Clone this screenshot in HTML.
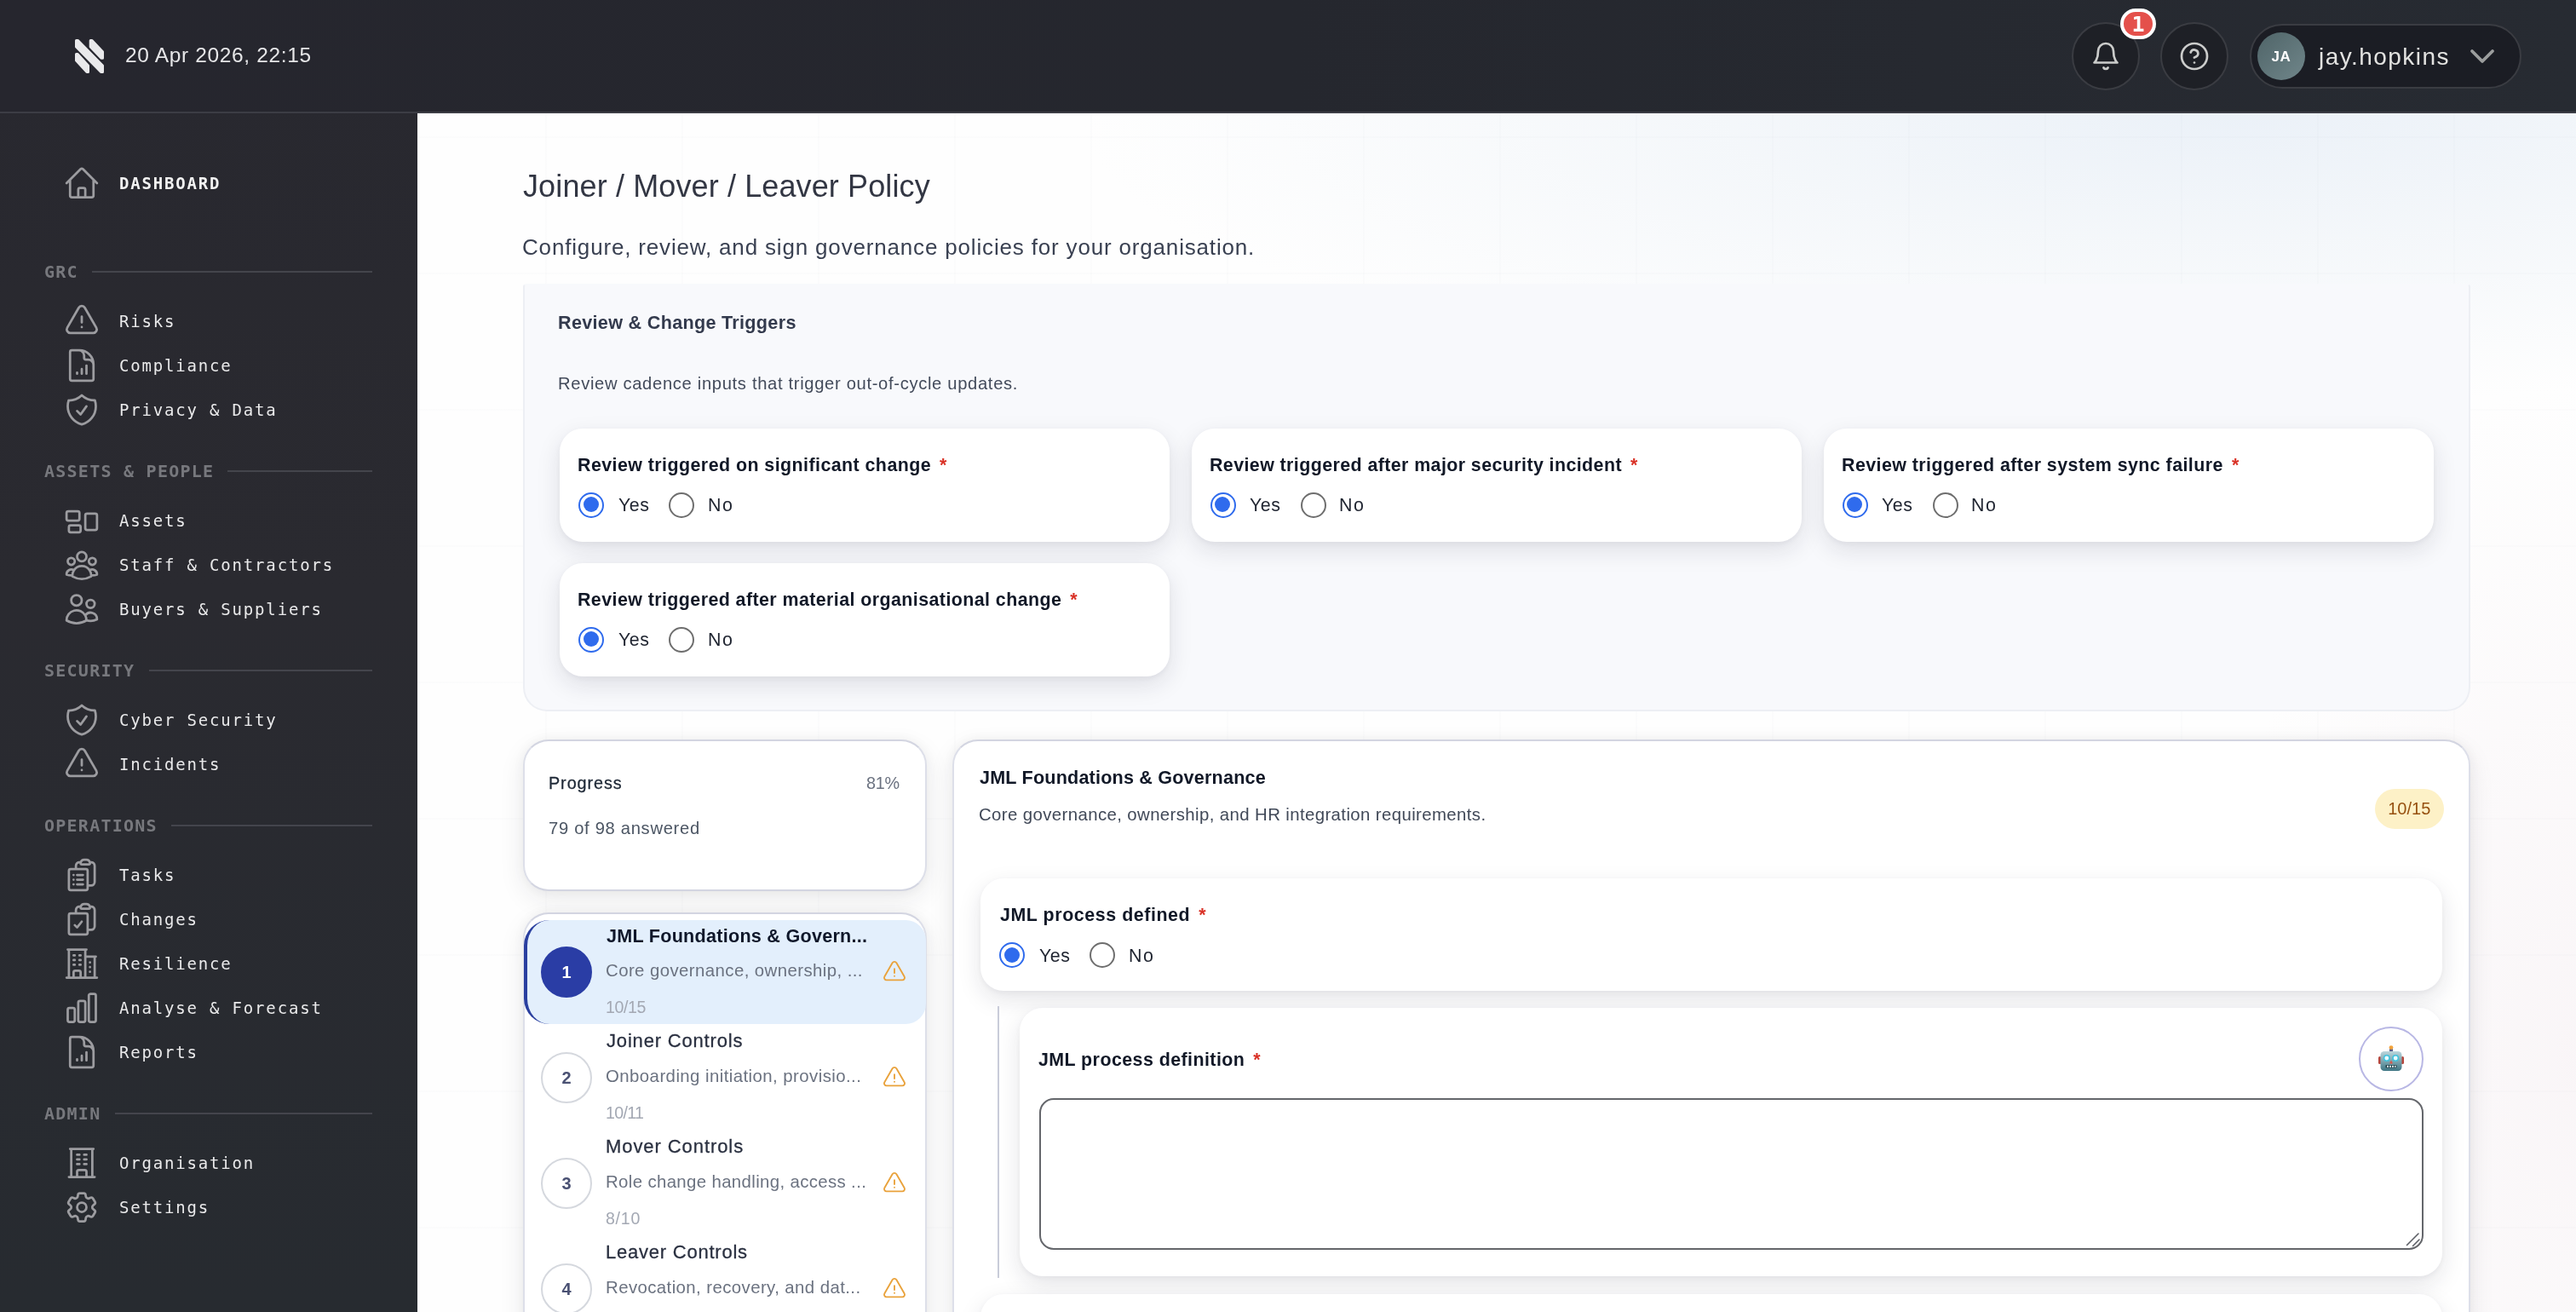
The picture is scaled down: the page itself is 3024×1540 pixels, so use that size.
<!DOCTYPE html>
<html lang="en">
<head>
<meta charset="utf-8">
<title>Joiner / Mover / Leaver Policy</title>
<style>
*{box-sizing:border-box;margin:0;padding:0}
html,body{width:3024px;height:1540px;overflow:hidden;background:#fff}
body{font-family:"Liberation Sans",sans-serif;color:#111827;position:relative}
.abs{position:absolute}
.t{position:absolute;white-space:nowrap;line-height:1}
i{display:block}
/* header */
#hdr{position:absolute;left:0;top:0;width:3024px;height:133px;background:linear-gradient(90deg,#26262e 0%,#25272e 50%,#272b32 100%);border-bottom:2px solid #3c3d45;z-index:5}
.hbtn{position:absolute;top:26px;width:80px;height:80px;border-radius:50%;background:#1e2026;border:2px solid #3a3c42}
.hbtn svg{position:absolute;left:20px;top:20px;width:36px;height:36px;fill:none;stroke:#cbcccb;stroke-width:1.8;stroke-linecap:round;stroke-linejoin:round}
#badge{position:absolute;left:2489px;top:10px;width:42px;height:36px;border-radius:18px;background:#e4504b;border:4px solid #fff;color:#fff;font-family:"DejaVu Sans Mono","Liberation Mono",monospace;font-weight:700;font-size:25px;line-height:29px;text-align:center}
#user{position:absolute;left:2640.5px;top:28px;width:319px;height:75.5px;border-radius:38px;background:#1b1d24;border:2px solid #3a3c42}
#avatar{position:absolute;left:2650px;top:38px;width:56px;height:56px;border-radius:50%;background:linear-gradient(135deg,#4f6468,#70868a);color:#fff;font-weight:700;font-size:17px;line-height:57px;text-align:center;letter-spacing:.6px}
/* sidebar */
#side{position:absolute;left:0;top:0;width:490px;height:1540px;background:linear-gradient(180deg,#28282f 0%,#2a2a30 45%,#272b30 100%);z-index:4}
.nav{position:absolute;left:139.5px;font-family:"DejaVu Sans Mono","Liberation Mono",monospace;font-size:19px;letter-spacing:1.82px;color:#e9e9ea;line-height:1;white-space:nowrap}
.nav.b{font-weight:700;color:#f2f2f2}
.sec{position:absolute;left:52px;font-family:"DejaVu Sans Mono","Liberation Mono",monospace;font-size:20px;font-weight:700;letter-spacing:1.25px;color:#77787d;line-height:1;white-space:nowrap}
.sln{position:absolute;height:2px;background:#44454c}
.ico{position:absolute;left:74px;width:44px;height:44px;fill:none;stroke:#9c9ca0;stroke-width:1.5;stroke-linecap:round;stroke-linejoin:round}
/* main */
#main{position:absolute;left:0;top:0;width:3024px;height:1540px;overflow:hidden;
background:radial-gradient(ellipse 1350px 340px at 2620px 133px,#ebf1f8 0%,rgba(241,245,249,.75) 45%,rgba(255,255,255,0) 100%),
radial-gradient(ellipse 420px 800px at 3024px 1250px,rgba(249,245,247,.95) 0%,rgba(255,255,255,0) 100%),#fefefe}
#grid{position:absolute;left:0;top:0;width:3024px;height:1540px;
background-image:linear-gradient(90deg,rgba(120,130,150,.02) 0,rgba(120,130,150,.02) 2px,transparent 2px),linear-gradient(180deg,rgba(120,130,150,.02) 0,rgba(120,130,150,.02) 2px,transparent 2px);background-size:160px 160px}
#panel{background:#f8f9fc;border:2px solid #edeff4;border-top-color:#f8f9fc;border-radius:4px 4px 28px 28px}
.qc{background:#fff;border-radius:27px;box-shadow:0 10px 28px rgba(28,30,50,.115),0 2px 6px rgba(28,30,50,.045)}
.ql{font-size:21.4px;font-weight:700;color:#111827}
.req{color:#d93025;margin-left:10px;font-weight:700}
.rd{width:30px;height:30px;border-radius:50%;border:2px solid #6e6e6e;background:#fff}
.rd.on{border:2.5px solid #2f6bed}
.rd.on i{position:absolute;left:3.5px;top:3.5px;width:18px;height:18px;border-radius:50%;background:#2f6bed}
.card{background:#fff;border:2px solid #d3d5e1;border-left-color:#dddfe9;border-right-color:#dddfe9;border-radius:30px;box-shadow:0 10px 30px rgba(30,30,50,.085),0 0 14px rgba(30,30,50,.045)}
.lsel{background:#e3effc;border-left:4px solid #2a3f9f;border-radius:30px 24px 24px 30px}
.num{width:60px;height:60px;border-radius:50%;border:2px solid #d5d8de;background:#fff;color:#4a5173;font-weight:700;font-size:20px;line-height:57px;text-align:center}
.num.sel{background:#2a3da5;border-color:#2a3da5;color:#fff}
#cnt{left:2788px;top:925.5px;width:80.5px;height:47px;border-radius:24px;background:#fdf1c7;color:#96500f;font-size:20px;line-height:47px;text-align:center}
#robot{left:2769px;top:1204.5px;width:76px;height:76px;border-radius:50%;border:2px solid #b8b7e4;background:#fff}
#robot svg{position:absolute;left:20px;top:19px}
#ta{left:1219.5px;top:1289px;width:1625.5px;height:178px;border:2px solid #64666b;border-radius:17px;background:#fff}
.t,.nav,.sec,#badge,#avatar,.num,#cnt{will-change:transform}
.lt.m{-webkit-text-stroke:.3px #2a3040}
#prog{-webkit-text-stroke:.3px #1f2937}
</style>
</head>
<body>
<div id="main"><div id="grid"></div>
<div class="t " id="title" style="left:614.25px;top:200.53px;font-size:36px;color:#323643;letter-spacing:0.121px;">Joiner / Mover / Leaver Policy</div>
<div class="t " id="sub" style="left:612.75px;top:276.99px;font-size:26px;color:#3a4152;letter-spacing:0.829px;">Configure, review, and sign governance policies for your organisation.</div>
<div class="abs" id="panel" style="left:613.5px;top:332.5px;width:2286.5px;height:502.5px"></div>
<div class="t " id="ptitle" style="left:654.75px;top:367.72px;font-size:21.6px;color:#333a4d;font-weight:700;letter-spacing:0.304px;">Review &amp; Change Triggers</div>
<div class="t " id="pdesc" style="left:654.75px;top:439.65px;font-size:20.2px;color:#434b5b;letter-spacing:0.667px;">Review cadence inputs that trigger out-of-cycle updates.</div>
<div class="abs qc" style="left:657.00px;top:502.50px;width:716.00px;height:133px"></div>
<div class="t ql" id="q1" style="left:678.00px;top:535.88px;font-size:21.4px;color:#111827;font-weight:700;letter-spacing:0.445px;">Review triggered on significant change<span class="req">*</span></div>
<div class="abs rd on" style="left:679.00px;top:577.75px"><i></i></div>
<div class="t yn" id="yes" style="left:725.75px;top:583.38px;font-size:21.4px;color:#1f2430;letter-spacing:0.5px;">Yes</div>
<div class="abs rd" style="left:785.00px;top:577.75px"></div>
<div class="t yn" id="no" style="left:830.50px;top:583.38px;font-size:21.4px;color:#1f2430;letter-spacing:1.5px;">No</div>
<div class="abs qc" style="left:1398.50px;top:502.50px;width:716.00px;height:133px"></div>
<div class="t ql" id="q2" style="left:1420.25px;top:535.88px;font-size:21.4px;color:#111827;font-weight:700;letter-spacing:0.416px;">Review triggered after major security incident<span class="req">*</span></div>
<div class="abs rd on" style="left:1420.50px;top:577.75px"><i></i></div>
<div class="t yn" style="left:1467.25px;top:583.38px;font-size:21.4px;color:#1f2430;letter-spacing:0.5px;">Yes</div>
<div class="abs rd" style="left:1526.50px;top:577.75px"></div>
<div class="t yn" style="left:1572.00px;top:583.38px;font-size:21.4px;color:#1f2430;letter-spacing:1.5px;">No</div>
<div class="abs qc" style="left:2140.50px;top:502.50px;width:716.50px;height:133px"></div>
<div class="t ql" id="q3" style="left:2162.25px;top:535.88px;font-size:21.4px;color:#111827;font-weight:700;letter-spacing:0.445px;">Review triggered after system sync failure<span class="req">*</span></div>
<div class="abs rd on" style="left:2162.50px;top:577.75px"><i></i></div>
<div class="t yn" style="left:2209.25px;top:583.38px;font-size:21.4px;color:#1f2430;letter-spacing:0.5px;">Yes</div>
<div class="abs rd" style="left:2268.50px;top:577.75px"></div>
<div class="t yn" style="left:2314.00px;top:583.38px;font-size:21.4px;color:#1f2430;letter-spacing:1.5px;">No</div>
<div class="abs qc" style="left:657.00px;top:660.50px;width:716.00px;height:133px"></div>
<div class="t ql" id="q4" style="left:678.00px;top:693.88px;font-size:21.4px;color:#111827;font-weight:700;letter-spacing:0.427px;">Review triggered after material organisational change<span class="req">*</span></div>
<div class="abs rd on" style="left:679.00px;top:735.75px"><i></i></div>
<div class="t yn" style="left:725.75px;top:741.38px;font-size:21.4px;color:#1f2430;letter-spacing:0.5px;">Yes</div>
<div class="abs rd" style="left:785.00px;top:735.75px"></div>
<div class="t yn" style="left:830.50px;top:741.38px;font-size:21.4px;color:#1f2430;letter-spacing:1.5px;">No</div>
<div class="abs card" style="left:614px;top:868px;width:474px;height:178px"></div>
<div class="t " id="prog" style="left:644.00px;top:909.74px;font-size:19.8px;color:#1f2937;letter-spacing:0.922px;">Progress</div>
<div class="t " id="pct" style="left:1016.50px;top:909.74px;font-size:19.8px;color:#6b7280;letter-spacing:-0.25px;">81%</div>
<div class="t " id="ans" style="left:644.00px;top:961.90px;font-size:20.2px;color:#4b5563;letter-spacing:0.69px;">79 of 98 answered</div>
<div class="abs card" style="left:614px;top:1071px;width:474px;height:560px"></div>
<div class="abs lsel" style="left:614.5px;top:1080.00px;width:472.5px;height:121.5px"></div>
<div class="abs num sel" style="left:635px;top:1110.75px">1</div>
<div class="t lt s" id="l1t" style="left:711.75px;top:1087.72px;font-size:21.6px;color:#0f172a;font-weight:700;letter-spacing:0.25px;">JML Foundations &amp; Govern...</div>
<div class="t ld" id="l1d" style="left:710.75px;top:1128.73px;font-size:20.4px;color:#6b7280;letter-spacing:0.417px;">Core governance, ownership, ...</div>
<div class="t lc" id="l1c" style="left:710.75px;top:1173.16px;font-size:19.6px;color:#a3a8b3;letter-spacing:-0.436px;">10/15</div>
<svg class="abs" viewBox="0 0 24 24" style="left:1035px;top:1126.00px;width:30px;height:30px;fill:none;stroke:#e9a23b;stroke-width:1.5;stroke-linecap:round;stroke-linejoin:round"><path d="M12 9v3.75m-9.303 3.376c-.866 1.5.217 3.374 1.948 3.374h14.71c1.73 0 2.813-1.874 1.948-3.374L13.949 3.378c-.866-1.5-3.032-1.5-3.898 0L2.697 16.126zM12 15.75h.007v.008H12v-.008z"/></svg>
<div class="abs num" style="left:635px;top:1234.75px">2</div>
<div class="t lt m" id="l2t" style="left:711.75px;top:1211.38px;font-size:22px;color:#2a3040;letter-spacing:0.821px;">Joiner Controls</div>
<div class="t ld" id="l2d" style="left:710.75px;top:1252.73px;font-size:20.4px;color:#6b7280;letter-spacing:0.432px;">Onboarding initiation, provisio...</div>
<div class="t lc" id="l2c" style="left:710.75px;top:1297.16px;font-size:19.6px;color:#a3a8b3;letter-spacing:-0.688px;">10/11</div>
<svg class="abs" viewBox="0 0 24 24" style="left:1035px;top:1250.00px;width:30px;height:30px;fill:none;stroke:#e9a23b;stroke-width:1.5;stroke-linecap:round;stroke-linejoin:round"><path d="M12 9v3.75m-9.303 3.376c-.866 1.5.217 3.374 1.948 3.374h14.71c1.73 0 2.813-1.874 1.948-3.374L13.949 3.378c-.866-1.5-3.032-1.5-3.898 0L2.697 16.126zM12 15.75h.007v.008H12v-.008z"/></svg>
<div class="abs num" style="left:635px;top:1358.75px">3</div>
<div class="t lt m" id="l3t" style="left:710.75px;top:1335.38px;font-size:22px;color:#2a3040;letter-spacing:0.923px;">Mover Controls</div>
<div class="t ld" id="l3d" style="left:710.75px;top:1376.73px;font-size:20.4px;color:#6b7280;letter-spacing:0.358px;">Role change handling, access ...</div>
<div class="t lc" id="l3c" style="left:710.75px;top:1421.16px;font-size:19.6px;color:#a3a8b3;letter-spacing:0.717px;">8/10</div>
<svg class="abs" viewBox="0 0 24 24" style="left:1035px;top:1374.00px;width:30px;height:30px;fill:none;stroke:#e9a23b;stroke-width:1.5;stroke-linecap:round;stroke-linejoin:round"><path d="M12 9v3.75m-9.303 3.376c-.866 1.5.217 3.374 1.948 3.374h14.71c1.73 0 2.813-1.874 1.948-3.374L13.949 3.378c-.866-1.5-3.032-1.5-3.898 0L2.697 16.126zM12 15.75h.007v.008H12v-.008z"/></svg>
<div class="abs num" style="left:635px;top:1482.75px">4</div>
<div class="t lt m" id="l4t" style="left:710.75px;top:1459.38px;font-size:22px;color:#2a3040;letter-spacing:0.768px;">Leaver Controls</div>
<div class="t ld" id="l4d" style="left:710.75px;top:1500.73px;font-size:20.4px;color:#6b7280;letter-spacing:0.409px;">Revocation, recovery, and dat...</div>
<div class="t lc" id="l4c" style="left:711.50px;top:1545.16px;font-size:19.6px;color:#a3a8b3;">9/12</div>
<svg class="abs" viewBox="0 0 24 24" style="left:1035px;top:1498.00px;width:30px;height:30px;fill:none;stroke:#e9a23b;stroke-width:1.5;stroke-linecap:round;stroke-linejoin:round"><path d="M12 9v3.75m-9.303 3.376c-.866 1.5.217 3.374 1.948 3.374h14.71c1.73 0 2.813-1.874 1.948-3.374L13.949 3.378c-.866-1.5-3.032-1.5-3.898 0L2.697 16.126zM12 15.75h.007v.008H12v-.008z"/></svg>
<div class="abs card" style="left:1118px;top:868px;width:1782px;height:760px"></div>
<div class="t " id="jt" style="left:1149.50px;top:901.97px;font-size:21.6px;color:#111827;font-weight:700;letter-spacing:0.185px;">JML Foundations &amp; Governance</div>
<div class="t " id="jd" style="left:1148.50px;top:945.73px;font-size:20.4px;color:#414958;letter-spacing:0.385px;">Core governance, ownership, and HR integration requirements.</div>
<div class="abs" id="cnt">10/15</div>
<div class="abs qc" style="left:1151.00px;top:1030.75px;width:1716.00px;height:132px"></div>
<div class="t ql" id="q5" style="left:1173.75px;top:1064.13px;font-size:21.4px;color:#111827;font-weight:700;letter-spacing:0.569px;">JML process defined<span class="req">*</span></div>
<div class="abs rd on" style="left:1173.00px;top:1106.00px"><i></i></div>
<div class="t yn" style="left:1219.75px;top:1111.63px;font-size:21.4px;color:#1f2430;letter-spacing:0.5px;">Yes</div>
<div class="abs rd" style="left:1279.00px;top:1106.00px"></div>
<div class="t yn" style="left:1324.50px;top:1111.63px;font-size:21.4px;color:#1f2430;letter-spacing:1.5px;">No</div>
<div class="abs" style="left:1170.75px;top:1181px;width:2px;height:318.5px;background:#c9ccd9"></div>
<div class="abs qc" style="left:1197px;top:1183px;width:1669.5px;height:314.5px"></div>
<div class="t ql" id="q6" style="left:1219.30px;top:1234.13px;font-size:21.4px;color:#111827;font-weight:700;letter-spacing:0.443px;">JML process definition<span class="req">*</span></div>
<div class="abs" id="robot"><svg viewBox="0 0 32 32" width="32" height="32"><defs><linearGradient id="rg" x1="0" y1="0" x2="0" y2="1"><stop offset="0" stop-color="#bcd6dc"/><stop offset="1" stop-color="#3f7684"/></linearGradient></defs><rect x="14" y="4.500" width="4" height="5" rx="1" fill="#5b5f8a"/><circle cx="16" cy="3.600" r="2.400" fill="#f2a33c"/><rect x="1" y="14" width="3.500" height="9" rx="1.600" fill="#b5463d"/><rect x="27.500" y="14" width="3.500" height="9" rx="1.600" fill="#b5463d"/><rect x="3.500" y="8" width="25" height="23" rx="4.500" fill="url(#rg)"/><circle cx="10.800" cy="16" r="3.200" fill="#eafcff" stroke="#3fc3de" stroke-width="1.500"/><circle cx="21.200" cy="16" r="3.200" fill="#eafcff" stroke="#3fc3de" stroke-width="1.500"/><path d="M16 18.500l2 4h-4z" fill="#d9574a"/><rect x="9.500" y="24" width="13" height="3.600" rx="0.800" fill="#20424b"/><path d="M11 24.800h2v2h-2zM14 24.800h2v2h-2zM17 24.800h2v2h-2zM20 24.800h1.500v2H20z" fill="#e8eef0"/></svg></div>
<div class="abs" id="ta"><svg viewBox="0 0 20 20" width="20" height="20" style="position:absolute;right:1px;bottom:1px;fill:none;stroke:#5d6067;stroke-width:1.600;stroke-linecap:round"><path d="M3.500 17.500L17 4M10.500 18.500L18 11"/></svg></div>
<div class="abs qc" style="left:1151px;top:1518.5px;width:1716px;height:133px"></div>
</div>
<div id="side">
<svg class="ico" viewBox="0 0 24 24" style="top:192.50px"><path d="M2.25 12l8.954-8.955c.44-.439 1.152-.439 1.591 0L21.75 12M4.5 9.75v10.125c0 .621.504 1.125 1.125 1.125H9.75v-4.875c0-.621.504-1.125 1.125-1.125h2.25c.621 0 1.125.504 1.125 1.125V21h4.125c.621 0 1.125-.504 1.125-1.125V9.75M8.25 21h8.25"/></svg>
<div class="nav b" style="top:206.34px">DASHBOARD</div>
<div class="sec" style="top:309.36px">GRC</div>
<div class="sln" style="left:108.0px;top:318.0px;width:328.5px"></div>
<svg class="ico" viewBox="0 0 24 24" style="top:354.50px"><path d="M12 9v3.75m-9.303 3.376c-.866 1.5.217 3.374 1.948 3.374h14.71c1.73 0 2.813-1.874 1.948-3.374L13.949 3.378c-.866-1.5-3.032-1.5-3.898 0L2.697 16.126zM12 15.75h.007v.008H12v-.008z"/></svg>
<div class="nav" style="top:368.34px">Risks</div>
<svg class="ico" viewBox="0 0 24 24" style="top:406.50px"><path d="M19.5 14.25v-2.625a3.375 3.375 0 00-3.375-3.375h-1.5A1.125 1.125 0 0113.5 7.125v-1.5a3.375 3.375 0 00-3.375-3.375H8.25M9 16.5v.75m3-3v3M15 12v5.25m-4.5-15H5.625c-.621 0-1.125.504-1.125 1.125v17.25c0 .621.504 1.125 1.125 1.125h12.75c.621 0 1.125-.504 1.125-1.125V11.25a9 9 0 00-9-9z"/></svg>
<div class="nav" style="top:420.34px">Compliance</div>
<svg class="ico" viewBox="0 0 24 24" style="top:458.50px"><path d="M9 12.75L11.25 15 15 9.75m-3-7.036A11.959 11.959 0 013.598 6 11.99 11.99 0 003 9.749c0 5.592 3.824 10.29 9 11.623 5.176-1.332 9-6.03 9-11.622 0-1.31-.21-2.571-.598-3.751h-.152c-3.196 0-6.1-1.248-8.25-3.285z"/></svg>
<div class="nav" style="top:472.34px">Privacy &amp; Data</div>
<div class="sec" style="top:543.11px">ASSETS &amp; PEOPLE</div>
<div class="sln" style="left:266.8px;top:551.8px;width:169.8px"></div>
<svg class="ico" viewBox="0 0 24 24" style="top:588.50px"><path d="M2.25 7.125C2.25 6.504 2.754 6 3.375 6h6c.621 0 1.125.504 1.125 1.125v3.75c0 .621-.504 1.125-1.125 1.125h-6a1.125 1.125 0 01-1.125-1.125v-3.75zM14.25 8.625c0-.621.504-1.125 1.125-1.125h5.25c.621 0 1.125.504 1.125 1.125v8.25c0 .621-.504 1.125-1.125 1.125h-5.25a1.125 1.125 0 01-1.125-1.125v-8.25zM3.75 16.125c0-.621.504-1.125 1.125-1.125h5.25c.621 0 1.125.504 1.125 1.125v2.25c0 .621-.504 1.125-1.125 1.125h-5.25a1.125 1.125 0 01-1.125-1.125v-2.25z"/></svg>
<div class="nav" style="top:602.34px">Assets</div>
<svg class="ico" viewBox="0 0 24 24" style="top:640.50px"><path d="M18 18.72a9.094 9.094 0 003.741-.479 3 3 0 00-4.682-2.72m.94 3.198l.001.031c0 .225-.012.447-.037.666A11.944 11.944 0 0112 21c-2.17 0-4.207-.576-5.963-1.584A6.062 6.062 0 016 18.719m12 0a5.971 5.971 0 00-.941-3.197m0 0A5.995 5.995 0 0012 12.75a5.995 5.995 0 00-5.058 2.772m0 0a3 3 0 00-4.681 2.72 8.986 8.986 0 003.74.477m.94-3.197a5.971 5.971 0 00-.94 3.197M15 6.75a3 3 0 11-6 0 3 3 0 016 0zm6 3a2.25 2.25 0 11-4.5 0 2.25 2.25 0 014.5 0zm-13.5 0a2.25 2.25 0 11-4.5 0 2.25 2.25 0 014.5 0z"/></svg>
<div class="nav" style="top:654.34px">Staff &amp; Contractors</div>
<svg class="ico" viewBox="0 0 24 24" style="top:692.50px"><path d="M15 19.128a9.38 9.38 0 002.625.372 9.337 9.337 0 004.121-.952 4.125 4.125 0 00-7.533-2.493M15 19.128v-.003c0-1.113-.285-2.16-.786-3.07M15 19.128v.106A12.318 12.318 0 018.624 21c-2.331 0-4.512-.645-6.374-1.766l-.001-.109a6.375 6.375 0 0111.964-3.07M12 6.375a3.375 3.375 0 11-6.75 0 3.375 3.375 0 016.75 0zm8.25 2.25a2.625 2.625 0 11-5.25 0 2.625 2.625 0 015.25 0z"/></svg>
<div class="nav" style="top:706.34px">Buyers &amp; Suppliers</div>
<div class="sec" style="top:777.11px">SECURITY</div>
<div class="sln" style="left:175.0px;top:785.8px;width:261.5px"></div>
<svg class="ico" viewBox="0 0 24 24" style="top:822.50px"><path d="M9 12.75L11.25 15 15 9.75m-3-7.036A11.959 11.959 0 013.598 6 11.99 11.99 0 003 9.749c0 5.592 3.824 10.29 9 11.623 5.176-1.332 9-6.03 9-11.622 0-1.31-.21-2.571-.598-3.751h-.152c-3.196 0-6.1-1.248-8.25-3.285z"/></svg>
<div class="nav" style="top:836.34px">Cyber Security</div>
<svg class="ico" viewBox="0 0 24 24" style="top:874.50px"><path d="M12 9v3.75m-9.303 3.376c-.866 1.5.217 3.374 1.948 3.374h14.71c1.73 0 2.813-1.874 1.948-3.374L13.949 3.378c-.866-1.5-3.032-1.5-3.898 0L2.697 16.126zM12 15.75h.007v.008H12v-.008z"/></svg>
<div class="nav" style="top:888.34px">Incidents</div>
<div class="sec" style="top:959.11px">OPERATIONS</div>
<div class="sln" style="left:201.0px;top:967.8px;width:235.5px"></div>
<svg class="ico" viewBox="0 0 24 24" style="top:1004.50px"><path d="M9 12h3.75M9 15h3.75M9 18h3.75m3 .75H18a2.25 2.25 0 002.25-2.25V6.108c0-1.135-.845-2.098-1.976-2.192a48.424 48.424 0 00-1.123-.08m-5.801 0c-.065.21-.1.433-.1.664 0 .414.336.75.75.75h4.5a.75.75 0 00.75-.75 2.25 2.25 0 00-.1-.664m-5.8 0A2.251 2.251 0 0113.5 2.25H15c1.012 0 1.867.668 2.15 1.586m-5.8 0c-.376.023-.75.05-1.124.08C9.095 4.01 8.25 4.973 8.25 6.108V8.25m0 0H4.875c-.621 0-1.125.504-1.125 1.125v11.25c0 .621.504 1.125 1.125 1.125h9.75c.621 0 1.125-.504 1.125-1.125V9.375c0-.621-.504-1.125-1.125-1.125H8.25zM6.75 12h.008v.008H6.75V12zm0 3h.008v.008H6.75V15zm0 3h.008v.008H6.75V18z"/></svg>
<div class="nav" style="top:1018.34px">Tasks</div>
<svg class="ico" viewBox="0 0 24 24" style="top:1056.50px"><path d="M11.35 3.836c-.065.21-.1.433-.1.664 0 .414.336.75.75.75h4.5a.75.75 0 00.75-.75 2.25 2.25 0 00-.1-.664m-5.8 0A2.251 2.251 0 0113.5 2.25H15c1.012 0 1.867.668 2.15 1.586m-5.8 0c-.376.023-.75.05-1.124.08C9.095 4.01 8.25 4.973 8.25 6.108V8.25m8.9-4.414c.376.023.75.05 1.124.08 1.131.094 1.976 1.057 1.976 2.192V16.5A2.25 2.25 0 0118 18.75h-2.25m-7.5-10.5H4.875c-.621 0-1.125.504-1.125 1.125v11.25c0 .621.504 1.125 1.125 1.125h9.75c.621 0 1.125-.504 1.125-1.125V18.75m-7.5-10.5h6.375c.621 0 1.125.504 1.125 1.125v9.375m-8.25-3l1.5 1.5 3-3.75"/></svg>
<div class="nav" style="top:1070.34px">Changes</div>
<svg class="ico" viewBox="0 0 24 24" style="top:1108.50px"><path d="M2.25 21h19.5m-18-18v18m10.5-18v18m6-13.5V21M6.75 6.75h.75m-.75 3h.75m-.75 3h.75m3-6h.75m-.75 3h.75m-.75 3h.75M6.75 21v-3.375c0-.621.504-1.125 1.125-1.125h2.25c.621 0 1.125.504 1.125 1.125V21M3 3h12m-.75 4.5H21m-3.75 3.75h.008v.008h-.008v-.008zm0 3h.008v.008h-.008v-.008zm0 3h.008v.008h-.008v-.008z"/></svg>
<div class="nav" style="top:1122.34px">Resilience</div>
<svg class="ico" viewBox="0 0 24 24" style="top:1160.50px"><path d="M3 13.125C3 12.504 3.504 12 4.125 12h2.25c.621 0 1.125.504 1.125 1.125v6.75C7.5 20.496 6.996 21 6.375 21h-2.25A1.125 1.125 0 013 19.875v-6.75zM9.75 8.625c0-.621.504-1.125 1.125-1.125h2.25c.621 0 1.125.504 1.125 1.125v11.25c0 .621-.504 1.125-1.125 1.125h-2.25a1.125 1.125 0 01-1.125-1.125V8.625zM16.5 4.125c0-.621.504-1.125 1.125-1.125h2.25C20.496 3 21 3.504 21 4.125v15.75c0 .621-.504 1.125-1.125 1.125h-2.25a1.125 1.125 0 01-1.125-1.125V4.125z"/></svg>
<div class="nav" style="top:1174.34px">Analyse &amp; Forecast</div>
<svg class="ico" viewBox="0 0 24 24" style="top:1212.50px"><path d="M19.5 14.25v-2.625a3.375 3.375 0 00-3.375-3.375h-1.5A1.125 1.125 0 0113.5 7.125v-1.5a3.375 3.375 0 00-3.375-3.375H8.25M9 16.5v.75m3-3v3M15 12v5.25m-4.5-15H5.625c-.621 0-1.125.504-1.125 1.125v17.25c0 .621.504 1.125 1.125 1.125h12.75c.621 0 1.125-.504 1.125-1.125V11.25a9 9 0 00-9-9z"/></svg>
<div class="nav" style="top:1226.34px">Reports</div>
<div class="sec" style="top:1297.11px">ADMIN</div>
<div class="sln" style="left:135.0px;top:1305.8px;width:301.5px"></div>
<svg class="ico" viewBox="0 0 24 24" style="top:1342.50px"><path d="M3.75 21h16.5M4.5 3h15M5.25 3v18m13.5-18v18M9 6.75h1.5m-1.5 3h1.5m-1.5 3h1.5m3-6H15m-1.5 3H15m-1.5 3H15M9 21v-3.375c0-.621.504-1.125 1.125-1.125h3.75c.621 0 1.125.504 1.125 1.125V21"/></svg>
<div class="nav" style="top:1356.34px">Organisation</div>
<svg class="ico" viewBox="0 0 24 24" style="top:1394.50px"><path d="M9.594 3.94c.09-.542.56-.94 1.11-.94h2.593c.55 0 1.02.398 1.11.94l.213 1.281c.063.374.313.686.645.87.074.04.147.083.22.127.324.196.72.257 1.075.124l1.217-.456a1.125 1.125 0 011.37.49l1.296 2.247a1.125 1.125 0 01-.26 1.431l-1.003.827c-.293.24-.438.613-.431.992a6.759 6.759 0 010 .255c-.007.378.138.75.43.99l1.005.828c.424.35.534.954.26 1.43l-1.298 2.247a1.125 1.125 0 01-1.369.491l-1.217-.456c-.355-.133-.75-.072-1.076.124a6.57 6.57 0 01-.22.128c-.331.183-.581.495-.644.869l-.213 1.28c-.09.543-.56.941-1.11.941h-2.594c-.55 0-1.02-.398-1.11-.94l-.213-1.281c-.062-.374-.312-.686-.644-.87a6.52 6.52 0 01-.22-.127c-.325-.196-.72-.257-1.076-.124l-1.217.456a1.125 1.125 0 01-1.369-.49l-1.297-2.247a1.125 1.125 0 01.26-1.431l1.004-.827c.292-.24.437-.613.43-.992a6.932 6.932 0 010-.255c.007-.378-.138-.75-.43-.99l-1.004-.828a1.125 1.125 0 01-.26-1.43l1.297-2.247a1.125 1.125 0 011.37-.491l1.216.456c.356.133.751.072 1.076-.124.072-.044.146-.087.22-.128.332-.183.582-.495.644-.869l.214-1.281z M15 12a3 3 0 11-6 0 3 3 0 016 0z"/></svg>
<div class="nav" style="top:1408.34px">Settings</div>
</div>
<div id="hdr">
<svg class="abs" style="left:84px;top:42px;width:44px;height:48px" viewBox="84 42 44 48"><g fill="#e9e9eb" stroke="#e9e9eb" stroke-width="3" stroke-linejoin="round"><path d="M89.500 47.500h2l29 29.500v7.500h-2l-29-29.500z"/><path d="M106.200 47.500h1.800l12.500 13.200v7.500h-1.600l-12.700-13.200z"/><path d="M89.500 63.500h1.600l12.400 13.600v7.400h-1.600l-12.400-13.400z"/></g></svg>
<div class="t " id="date" style="left:146.50px;top:52.51px;font-size:24.5px;color:#e6e6e8;letter-spacing:0.656px;">20 Apr 2026, 22:15</div>
<div class="hbtn" style="left:2432px"><svg viewBox="0 0 24 24"><path d="M6 8a6 6 0 0 1 12 0c0 7 3 9 3 9H3s3-2 3-9"/><path d="M10.3 21a1.94 1.94 0 0 0 3.4 0"/></svg></div>
<div id="badge">1</div>
<div class="hbtn" style="left:2536px"><svg viewBox="0 0 24 24"><circle cx="12" cy="12" r="10"/><path d="M9.09 9a3 3 0 0 1 5.83 1c0 2-3 3-3 3"/><path d="M12 17h.01"/></svg></div>
<div id="user"></div><div id="avatar">JA</div>
<div class="t " id="uname" style="left:2721.50px;top:52.80px;font-size:28px;color:#e2e2e0;letter-spacing:1.45px;">jay.hopkins</div>
<svg class="abs" style="left:2890px;top:41.8px;width:48px;height:48px;fill:none;stroke:#9b9d9d;stroke-width:1.9;stroke-linecap:round;stroke-linejoin:round" viewBox="0 0 24 24"><path d="m6 9 6 6 6-6"/></svg>
</div>
</body>
</html>
